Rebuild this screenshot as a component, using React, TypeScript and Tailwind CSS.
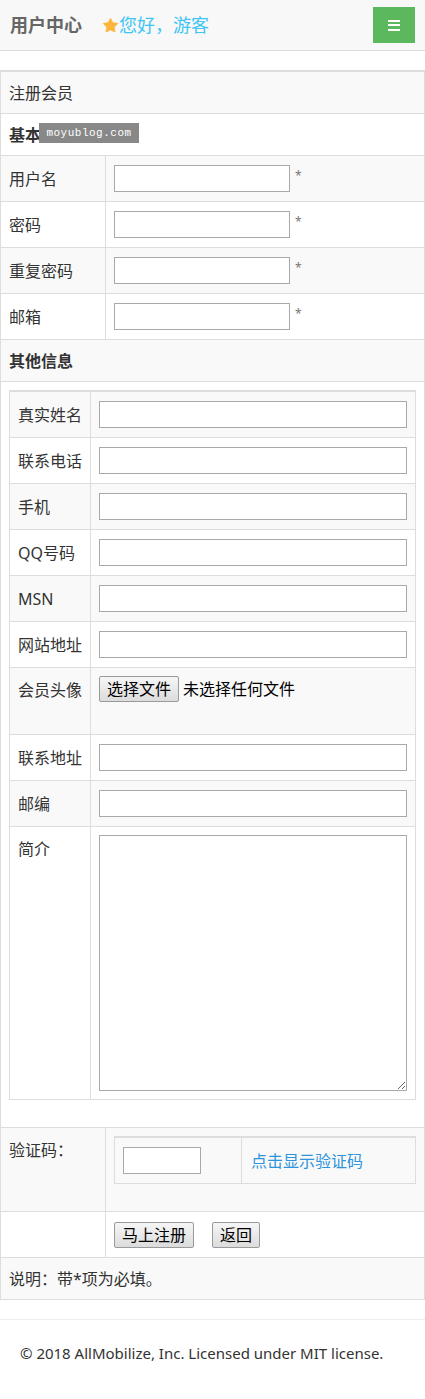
import { Star } from "lucide-react";

const font = { fontFamily: '"Noto Sans", "Noto Sans CJK SC", sans-serif' };

const inputCls =
  "h-[27px] border border-[#a9a9a9] bg-white px-1 text-[16px] outline-none";

function BasicRow({ label, striped }: { label: string; striped?: boolean }) {
  return (
    <div
      className={`flex h-[46px] border-b border-[#ddd] ${striped ? "bg-[#f9f9f9]" : "bg-white"}`}
    >
      <div className="flex w-[105px] shrink-0 items-center border-r border-[#ddd] pl-2">
        {label}
      </div>
      <div className="flex items-center pl-2">
        <input type="text" className={`${inputCls} w-[176px]`} />
        <span className="relative -top-[3px] ml-[5px] text-[12px] text-[#777]">*</span>
      </div>
    </div>
  );
}

function InnerRow({
  label,
  striped,
  last,
}: {
  label: string;
  striped?: boolean;
  last?: boolean;
}) {
  return (
    <div
      className={`flex h-[46px] ${last ? "" : "border-b"} border-[#ddd] ${striped ? "bg-[#f9f9f9]" : "bg-white"}`}
    >
      <div className="flex w-[81px] shrink-0 items-center border-r border-[#ddd] pl-2">
        {label}
      </div>
      <div className="flex flex-1 items-center px-2">
        <input type="text" className={`${inputCls} w-full`} />
      </div>
    </div>
  );
}

function NativeButton({ children }: { children: React.ReactNode }) {
  return (
    <button
      type="button"
      className="h-[26px] rounded-[2px] border border-[#9a9a9a] bg-gradient-to-b from-[#f6f6f6] to-[#dcdcdc] px-[7px] text-[16px] leading-[24px] text-black"
    >
      {children}
    </button>
  );
}

export default function App() {
  return (
    <div className="min-h-screen bg-white text-[16px] text-[#333]" style={font}>
      {/* header */}
      <div className="flex h-[51px] items-center border-b border-[#ddd] bg-[#f8f8f8] pl-[10px] pr-[10px]">
        <span className="text-[18px] font-bold text-[#666]">用户中心</span>
        <span className="ml-[20px] flex items-center text-[18px] text-[#3ec5f5]">
          <Star size={17} className="fill-[#fcb63a] text-[#fcb63a]" strokeWidth={1} />
          <span>您好，游客</span>
        </span>
        <button
          type="button"
          className="ml-auto flex h-[36px] w-[42px] flex-col items-center justify-center gap-[2.5px] bg-[#5cb85c]"
        >
          <span className="h-[2px] w-[12px] bg-white" />
          <span className="h-[2px] w-[12px] bg-white" />
          <span className="h-[2px] w-[12px] bg-white" />
        </button>
      </div>

      {/* form table */}
      <div className="mt-[19px] border-x border-t-2 border-[#ddd]">
        <div className="flex h-[42px] items-center border-b border-[#ddd] bg-[#f9f9f9] pl-2">
          注册会员
        </div>
        <div className="relative flex h-[42px] items-center border-b border-[#ddd] bg-white pl-2 font-bold">
          基本信息
          <span className="absolute left-[38px] top-[9px] flex h-[20px] w-[100px] items-center justify-center bg-[#888] font-mono text-[11px] font-normal tracking-[0.5px] text-white">
            moyublog.com
          </span>
        </div>
        <BasicRow label="用户名" striped />
        <BasicRow label="密码" />
        <BasicRow label="重复密码" striped />
        <BasicRow label="邮箱" />
        <div className="flex h-[42px] items-center border-b border-[#ddd] bg-[#f9f9f9] pl-2 font-bold">
          其他信息
        </div>

        {/* nested table */}
        <div className="border-b border-[#ddd] bg-white px-2 pb-[27px] pt-2">
          <div className="border-x border-b border-t-2 border-[#ddd]">
            <InnerRow label="真实姓名" striped />
            <InnerRow label="联系电话" />
            <InnerRow label="手机" striped />
            <InnerRow label="QQ号码" />
            <InnerRow label="MSN" striped />
            <InnerRow label="网站地址" />
            <div className="flex h-[67px] border-b border-[#ddd] bg-[#f9f9f9]">
              <div className="w-[81px] shrink-0 border-r border-[#ddd] pl-2 pt-[10px] leading-[24px]">
                会员头像
              </div>
              <div className="flex h-fit items-center pl-2 pt-2">
                <NativeButton>选择文件</NativeButton>
                <span className="ml-[4px] text-[16px] text-black">未选择任何文件</span>
              </div>
            </div>
            <InnerRow label="联系地址" />
            <InnerRow label="邮编" striped />
            <div className="flex h-[272px] bg-white">
              <div className="w-[81px] shrink-0 border-r border-[#ddd] pl-2 pt-[10px] leading-[24px]">
                简介
              </div>
              <div className="flex-1 px-2 py-2">
                <textarea className="block h-[256px] w-full resize border border-[#a9a9a9] bg-white outline-none" />
              </div>
            </div>
          </div>
        </div>

        {/* captcha */}
        <div className="flex h-[84px] border-b border-[#ddd] bg-[#f9f9f9]">
          <div className="w-[105px] shrink-0 border-r border-[#ddd] pl-2 pt-[10px] leading-[24px]">
            验证码：
          </div>
          <div className="flex-1 px-2 pt-2">
            <div className="flex h-[48px] border-x border-b border-t-2 border-[#ddd] bg-[#f9f9f9]">
              <div className="flex w-[127px] items-center border-r border-[#ddd] pl-2">
                <input type="text" className={`${inputCls} w-[78px]`} />
              </div>
              <div className="flex items-center pl-[9px] text-[#2d93dc]">点击显示验证码</div>
            </div>
          </div>
        </div>

        {/* buttons */}
        <div className="flex h-[46px] border-b border-[#ddd] bg-white">
          <div className="w-[105px] shrink-0 border-r border-[#ddd]" />
          <div className="flex items-center gap-[18px] pl-2">
            <NativeButton>马上注册</NativeButton>
            <NativeButton>返回</NativeButton>
          </div>
        </div>

        <div className="flex h-[42px] items-center border-b border-[#ddd] bg-[#f9f9f9] pl-2">
          说明：带*项为必填。
        </div>
      </div>

      {/* footer */}
      <div className="mt-[19px] border-t border-[#eee] pt-[22px]">
        <p className="pl-[20px] text-[15px] leading-[22px] text-[#333]">
          © 2018 AllMobilize, Inc. Licensed under MIT license.
        </p>
      </div>
    </div>
  );
}
